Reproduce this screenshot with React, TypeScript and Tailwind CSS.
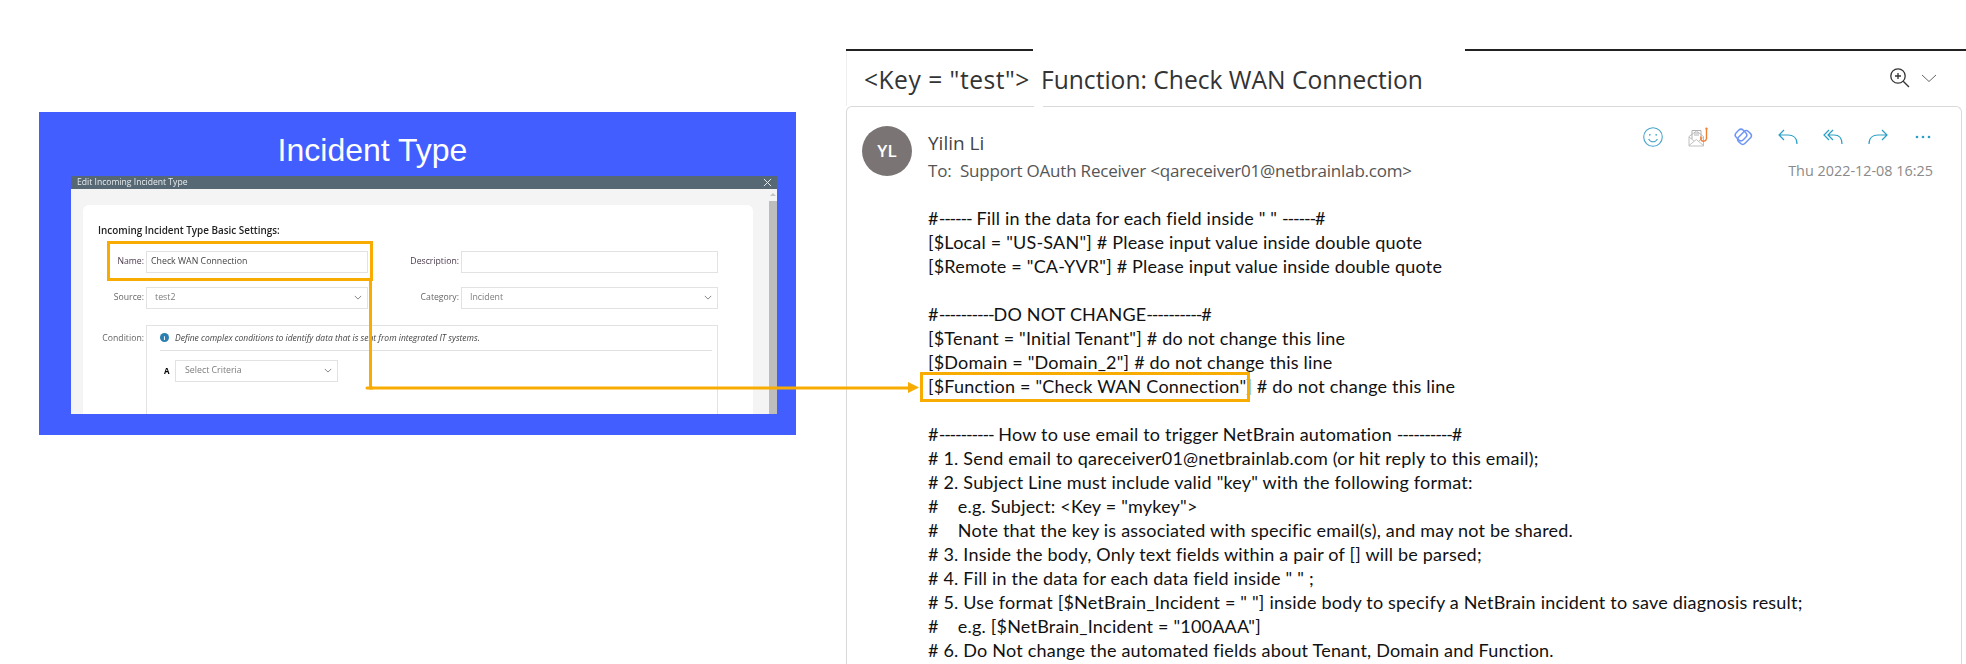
import React from "react";

const bodyLines = [
  '#------ Fill in the data for each field inside " " ------#',
  '[$Local = "US-SAN"] # Please input value inside double quote',
  '[$Remote = "CA-YVR"] # Please input value inside double quote',
  ' ',
  '#----------DO NOT CHANGE----------#',
  '[$Tenant = "Initial Tenant"] # do not change this line',
  '[$Domain = "Domain_2"] # do not change this line',
  '[$Function = "Check WAN Connection"] # do not change this line',
  ' ',
  '#---------- How to use email to trigger NetBrain automation ----------#',
  '# 1. Send email to qareceiver01@netbrainlab.com (or hit reply to this email);',
  '# 2. Subject Line must include valid "key" with the following format:',
  '#    e.g. Subject: <Key = "mykey">',
  '#    Note that the key is associated with specific email(s), and may not be shared.',
  '# 3. Inside the body, Only text fields within a pair of [] will be parsed;',
  '# 4. Fill in the data for each data field inside " " ;',
  '# 5. Use format [$NetBrain_Incident = " "] inside body to specify a NetBrain incident to save diagnosis result;',
  '#    e.g. [$NetBrain_Incident = "100AAA"]',
  '# 6. Do Not change the automated fields about Tenant, Domain and Function.',
];

const Chevron = ({ className = "" }: { className?: string }) => (
  <svg viewBox="0 0 10 6" className={className} fill="none" stroke="#777" strokeWidth="1.1">
    <path d="M1 1l4 4 4-4" />
  </svg>
);

function Field({ label, children, labelClass = "" }: { label: string; children: React.ReactNode; labelClass?: string }) {
  return (
    <div className="flex items-center">
      <span className={`w-[60px] pr-[2px] text-right text-[8.7px] ${labelClass}`}>{label}</span>
      {children}
    </div>
  );
}

function Box({ value, muted, chevron, width, pad = "pl-[8px]" }: { value?: string; muted?: boolean; chevron?: boolean; width: string; pad?: string }) {
  return (
    <div className={`flex h-[22px] items-center justify-between border border-[#e2e2e2] bg-white pr-[5px] text-[8.8px] ${pad} ${width} ${muted ? "text-[#7d7d7d]" : "text-[#444]"}`}>
      <span>{value}</span>
      {chevron && <Chevron className="h-[5px] w-[8px]" />}
    </div>
  );
}

function IncidentPanel() {
  return (
    <div className="flex h-[323px] w-[757px] flex-col bg-[#435eff]">
      <div className="flex h-[64px] items-center justify-center pr-[90px] pt-[12px] font-['Liberation_Sans',sans-serif] text-[32px] leading-none text-white">
        Incident Type
      </div>
      <div className="ml-[32px] flex h-[238px] w-[706px] flex-col overflow-hidden font-['Open_Sans',sans-serif] blur-[0.4px]">
        <div className="flex h-[20px] items-center justify-between bg-[#566874] pl-[6px] pr-[5px] text-[8.6px] text-[#e8ecee]">
          <span>Edit Incoming Incident Type</span>
          <svg viewBox="0 0 10 10" className="h-[9px] w-[9px]" fill="none" stroke="#e8ecee" strokeWidth="1.1">
            <path d="M1 1l8 8M9 1l-8 8" />
          </svg>
        </div>
        <div className="flex flex-1 bg-[#f4f4f4]">
          <div className="ml-[12px] mt-[16px] w-[670px] flex-none rounded-t-[6px] bg-white pl-[15px]">
            <div className="pt-[17px] text-[9.9px] font-semibold leading-[16px] text-[#222]">Incoming Incident Type Basic Settings:</div>
            <div className="-ml-[12px] mt-[13px] flex flex-col gap-[14px]">
              <div className="flex">
                <Field label="Name:" labelClass="text-[#4a3a4a]">
                  <Box value="Check WAN Connection" pad="pl-[4px]" width="w-[222px]" />
                </Field>
                <div className="ml-[33px]">
                  <Field label="Description:" labelClass="text-[#4a3a4a]">
                    <Box width="w-[257px]" />
                  </Field>
                </div>
              </div>
              <div className="flex">
                <Field label="Source:" labelClass="text-[#666]">
                  <Box value="test2" muted chevron width="w-[222px]" />
                </Field>
                <div className="ml-[33px]">
                  <Field label="Category:" labelClass="text-[#666]">
                    <Box value="Incident" muted chevron width="w-[257px]" />
                  </Field>
                </div>
              </div>
            </div>
            <div className="-ml-[12px] mt-[16px] flex items-start">
              <span className="w-[60px] pr-[2px] pt-[7px] text-right text-[8.7px] leading-[12px] text-[#666]">Condition:</span>
              <div className="h-[100px] w-[572px] border border-[#e2e2e2] pl-[13px] pr-[5px]">
                <div className="flex h-[25px] items-center gap-[6px] border-b border-[#e0e0e0]">
                  <span className="flex h-[9px] w-[9px] items-center justify-center rounded-full bg-[#2a7fb0] text-[6px] font-bold leading-none text-white">i</span>
                  <span className="text-[8.5px] italic text-[#444]">Define complex conditions to identify data that is sent from integrated IT systems.</span>
                </div>
                <div className="mt-[9px] flex items-center gap-[5px]">
                  <span className="w-[10px] pl-[4px] text-[8px] font-bold text-black">A</span>
                  <Box value="Select Criteria" muted chevron pad="pl-[9px]" width="w-[163px]" />
                </div>
              </div>
            </div>
          </div>
          <div className="ml-[16px] flex w-[8px] flex-col">
            <div className="flex h-[12px] items-center justify-center">
              <div className="h-0 w-0 border-x-[3px] border-b-[3px] border-x-transparent border-b-[#c4c4c4]" />
            </div>
            <div className="flex-1 bg-[#bdbdbd]" />
          </div>
        </div>
      </div>
    </div>
  );
}

function ActionIcons() {
  const blue = "#2a9fc6";
  return (
    <div className="flex items-center gap-[25px]">
      <svg viewBox="0 0 20 20" className="h-5 w-5" fill="none" stroke="#4aa5c9" strokeWidth="1.1">
        <circle cx="10" cy="10" r="9.3" />
        <circle cx="6.8" cy="7.8" r="0.9" fill="#4aa5c9" stroke="none" />
        <circle cx="13.2" cy="7.8" r="0.9" fill="#4aa5c9" stroke="none" />
        <path d="M5.6 12c1 1.9 2.6 2.8 4.4 2.8s3.4-.9 4.4-2.8" />
      </svg>
      <svg viewBox="0 0 20 20" className="h-5 w-5" fill="none" strokeWidth="0.9">
        <path d="M1 9.5L8.5 4l7 5.5V19H1z" stroke="#b9b9b9" />
        <path d="M1 18.5l7.3-6 7.2 6M1 10l5 4M15.5 10l-4.5 4" stroke="#b9b9b9" />
        <path d="M4 12V3.5h9V12M6 6h5M6 8h5" stroke="#a8a8a8" />
        <path d="M18.5 3v8.5a3 3 0 01-5.6 1.2V9.5" stroke="#ef7d32" strokeWidth="1.4" />
        <circle cx="18.5" cy="1.8" r="1.2" fill="#ef7d32" />
      </svg>
      <svg viewBox="0 0 20 20" className="h-5 w-5" fill="none" stroke="#6f95f6" strokeWidth="1.5">
        <rect x="3" y="3" width="10" height="10" rx="3.3" transform="rotate(45 8 8)" />
        <rect x="4.5" y="6" width="14" height="9" rx="3.3" transform="rotate(-45 11.5 10.5)" />
      </svg>
      <svg viewBox="0 0 20 16" className="h-4 w-5" fill="none" stroke={blue} strokeWidth="1.2">
        <path d="M6 1L1 6l5 5M1 6h9c5 0 9 3 9 9" />
      </svg>
      <svg viewBox="0 0 20 16" className="h-4 w-5" fill="none" stroke={blue} strokeWidth="1.2">
        <path d="M6 1L1 6l5 5M10 1L5 6l5 5M5 6h6c5 0 8 3 8 9" />
      </svg>
      <svg viewBox="0 0 20 16" className="h-4 w-5" fill="none" stroke={blue} strokeWidth="1.2">
        <path d="M14 1l5 5-5 5M19 6h-9c-5 0-9 3-9 9" />
      </svg>
      <svg viewBox="0 0 20 6" className="h-[6px] w-5" fill={blue}>
        <circle cx="4" cy="3" r="1.3" />
        <circle cx="10" cy="3" r="1.3" />
        <circle cx="16" cy="3" r="1.3" />
      </svg>
    </div>
  );
}

function BodyLine({ text }: { text: string }) {
  const parts = text.split(/(-{4,})/);
  return (
    <div className="h-[24px] whitespace-pre">
      {parts.map((p, i) =>
        i % 2 === 1 ? (
          <span key={i} className="tracking-[-1.2px]">{p}</span>
        ) : (
          <span key={i}>{p}</span>
        )
      )}
    </div>
  );
}

function EmailPanel() {
  return (
    <div className="mt-[49px] flex h-[615px] w-[1120px] flex-col">
      <div className="flex h-[2px]">
        <div className="w-[187px] bg-[#222]" />
        <div className="ml-[432px] flex-1 bg-[#222]" />
      </div>
      <div className="flex h-[55px] items-center border-l border-[#efefef] pl-[17px] pr-[29px] font-['Open_Sans',sans-serif] text-[24.6px] font-medium text-[#333]">
        <span className="w-[177px] whitespace-pre pt-[3px] tracking-[0.5px]">{'<Key = "test">'}</span>
        <span className="pt-[3px]">Function: Check WAN Connection</span>
        <div className="ml-auto flex items-center gap-[11px] pb-[2px]">
          <svg viewBox="0 0 20 20" className="h-5 w-5" fill="none" stroke="#333" strokeWidth="1.3">
            <circle cx="8" cy="8" r="7.2" />
            <path d="M8 5v6M5 8h6" />
            <path d="M13.2 13.2l5.8 5.8" />
          </svg>
          <svg viewBox="0 0 16 8" className="h-2 w-4" fill="none" stroke="#666" strokeWidth="1">
            <path d="M1 1l7 6.5L15 1" />
          </svg>
        </div>
      </div>
      <div className="relative mr-[4px] flex-1 rounded-t-[6px] border-x border-t border-[#d9d9d9]">
        <div className="absolute -top-[1px] left-[187px] h-[3px] w-[9px] bg-white" />
        <div className="flex pl-[15px] pr-[28px] pt-[19px]">
          <div className="flex h-[50px] w-[50px] flex-none items-center justify-center rounded-full bg-[#7a7574] font-['Open_Sans',sans-serif] text-[17px] font-semibold text-white">
            YL
          </div>
          <div className="ml-[16px] flex-1 pt-[5px] font-['Open_Sans',sans-serif]">
            <div className="text-[19px] leading-[24px] text-[#444]">Yilin Li</div>
            <div className="mt-[4px] whitespace-pre text-[17px] leading-[24px] tracking-[-0.2px] text-[#555]">{'To:  Support OAuth Receiver <qareceiver01@netbrainlab.com>'}</div>
          </div>
          <div className="flex flex-col items-end pt-[1px]">
            <ActionIcons />
            <div className="mt-[14px] font-['Open_Sans',sans-serif] text-[14.4px] leading-[20px] text-[#8a8a8a]">Thu 2022-12-08 16:25</div>
          </div>
        </div>
        <div className="pl-[81px] pt-[23px] font-['Lato',sans-serif] text-[18px] leading-[24px] tracking-[0.2px] text-[#111]">
          {bodyLines.map((l, i) => (
            <BodyLine key={i} text={l} />
          ))}
        </div>
      </div>
    </div>
  );
}

export default function App() {
  return (
    <div className="relative flex h-[664px] w-[1966px] overflow-hidden bg-white">
      <div className="ml-[39px] mt-[112px]">
        <IncidentPanel />
      </div>
      <div className="ml-[50px]">
        <EmailPanel />
      </div>
      <div className="absolute left-[107px] top-[241px] h-[40px] w-[266px] border-[3px] border-[#f8ab00]" />
      <svg className="absolute left-[360px] top-[275px]" width="570" height="125" fill="none">
        <path d="M10.5 5V113H550" stroke="#f8ab00" strokeWidth="3" />
        <path d="M7 113H12" stroke="#f8ab00" strokeWidth="3" strokeLinecap="round" />
        <path d="M548 107L559 112.5L548 118Z" fill="#f8ab00" />
      </svg>
      <div className="absolute left-[920px] top-[372px] h-[30px] w-[330px] border-[3px] border-[#f8ab00]" />
    </div>
  );
}
